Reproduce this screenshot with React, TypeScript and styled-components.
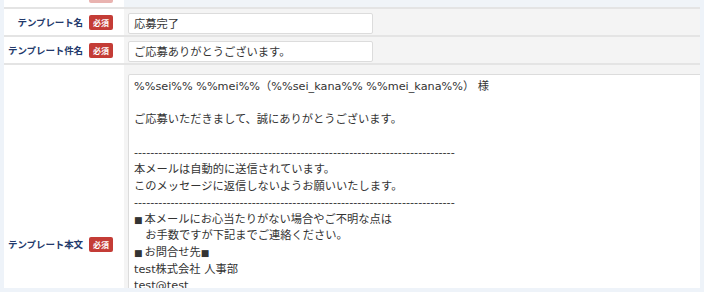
import React from 'react';
import styled, {createGlobalStyle} from "styled-components";

const GlobalStyle = createGlobalStyle`
  html, body {
    margin: 0;
    padding: 0;
    background-color: #eef3f9;
  }
  body {
    font-family: "Noto Sans", "Noto Sans CJK JP", sans-serif;
  }
`

const Frame = styled.div`
  margin: 0 4px;
  width: 696px;
  height: 288px;
  overflow: hidden;
  background-color: #ffffff;
`

const Row = styled.div<{ $stub?: boolean }>`
  display: flex;
  flex-flow: row;
  border-bottom: 2px solid #e4e4e4;
  height: ${p => p.$stub ? '7px' : 'auto'};
  overflow: ${p => p.$stub ? 'hidden' : 'visible'};
`

const LabelCell = styled.div`
  width: 120px;
  flex-shrink: 0;
  box-sizing: border-box;
  padding-right: 11px;
  display: flex;
  flex-flow: row;
  justify-content: flex-end;
  align-items: center;
  gap: 6px;
  background-color: #ffffff;
`

const StubLabel = styled(LabelCell)`
  align-items: flex-start;
`

const LabelText = styled.span`
  font-family: "Noto Sans CJK JP", sans-serif;
  font-size: 9.5px;
  font-weight: 700;
  color: #23396b;
  white-space: nowrap;
  letter-spacing: -0.1px;
`

const Badge = styled.span`
  width: 24px;
  height: 15px;
  border-radius: 2px;
  background-color: #c43c36;
  color: #ffffff;
  font-family: "Noto Sans CJK JP", sans-serif;
  font-size: 8px;
  font-weight: 700;
  display: flex;
  align-items: center;
  justify-content: center;
`

// bottom edge of the previous row's badge, scrolled mostly out of view
const BadgeEdge = styled.span`
  width: 24px;
  height: 3px;
  border-radius: 0 0 2px 2px;
  background-color: #e9b3b0;
`

const ValueCell = styled.div<{ $tall?: boolean; $stub?: boolean }>`
  flex-grow: 1;
  min-width: 0;
  box-sizing: border-box;
  padding: ${p => p.$tall ? '9px 0 9px 4px' : '4px 0 1px 4px'};
  background-color: ${p => p.$stub ? '#f0f4f8' : '#f4f4f4'};
`

const Input = styled.div`
  width: 245px;
  height: 21px;
  box-sizing: border-box;
  border: 1px solid #dcdcdc;
  border-radius: 2px;
  background-color: #ffffff;
  padding: 0 5px;
  font-family: "Noto Sans CJK JP", sans-serif;
  font-size: 11.25px;
  line-height: 19px;
  color: #333333;
  white-space: nowrap;
`

const TextArea = styled.div`
  width: 600px;
  height: 340px;
  box-sizing: border-box;
  border: 1px solid #dcdcdc;
  border-radius: 2px;
  background-color: #ffffff;
  padding: 4px 5px;
  font-family: "DejaVu Sans", "Noto Sans CJK JP", sans-serif;
  font-size: 11.25px;
  line-height: 16.6px;
  color: #333333;
  white-space: pre;
`

const Square = styled.span`
  font-size: 9px;
  margin-right: 2px;
`

const dashes = '-'.repeat(79)

function App() {
    return (
        <>
            <GlobalStyle/>
            <Frame>
                <Row $stub>
                    <StubLabel>
                        <BadgeEdge/>
                    </StubLabel>
                    <ValueCell $stub/>
                </Row>
                <Row>
                    <LabelCell>
                        <LabelText>テンプレート名</LabelText>
                        <Badge>必須</Badge>
                    </LabelCell>
                    <ValueCell>
                        <Input>応募完了</Input>
                    </ValueCell>
                </Row>
                <Row>
                    <LabelCell>
                        <LabelText>テンプレート件名</LabelText>
                        <Badge>必須</Badge>
                    </LabelCell>
                    <ValueCell>
                        <Input>ご応募ありがとうございます。</Input>
                    </ValueCell>
                </Row>
                <Row>
                    <LabelCell>
                        <LabelText>テンプレート本文</LabelText>
                        <Badge>必須</Badge>
                    </LabelCell>
                    <ValueCell $tall>
                        <TextArea>
                            {'%%sei%% %%mei%%（%%sei_kana%% %%mei_kana%%） 様\n\n'}
                            {'ご応募いただきまして、誠にありがとうございます。\n\n'}
                            {dashes + '\n'}
                            {'本メールは自動的に送信されています。\n'}
                            {'このメッセージに返信しないようお願いいたします。\n'}
                            {dashes + '\n'}
                            <Square>■</Square>{'本メールにお心当たりがない場合やご不明な点は\n'}
                            {'　お手数ですが下記までご連絡ください。\n'}
                            <Square>■</Square>{'お問合せ先'}<Square>■</Square>{'\n'}
                            {'test株式会社 人事部\n'}
                            {'test@test'}
                        </TextArea>
                    </ValueCell>
                </Row>
            </Frame>
        </>
    );
}

export default App;
